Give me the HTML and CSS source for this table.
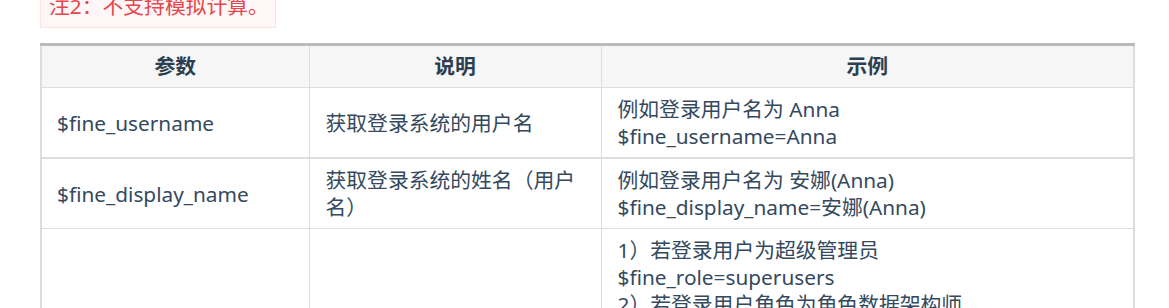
FILE: index.html
```html
<!DOCTYPE html>
<html lang="zh-CN">
<head>
<meta charset="utf-8">
<link rel="stylesheet" href="styles.css">
</head>
<body>
<div class="page">
  <div class="note">注2：不支持模拟计算。</div>
  <table class="params">
    <colgroup>
      <col class="c1"><col class="c2"><col class="c3">
    </colgroup>
    <thead>
      <tr><th>参数</th><th>说明</th><th>示例</th></tr>
    </thead>
    <tbody>
      <tr>
        <td>$fine_username</td>
        <td>获取登录系统的用户名</td>
        <td>例如登录用户名为 Anna<br>$fine_username=Anna</td>
      </tr>
      <tr>
        <td>$fine_display_name</td>
        <td>获取登录系统的姓名（用户名）</td>
        <td>例如登录用户名为 安娜(Anna)<br>$fine_display_name=安娜(Anna)</td>
      </tr>
      <tr>
        <td>$fine_role</td>
        <td>获取登录系统的角色</td>
        <td>1）若登录用户为超级管理员<br>$fine_role=superusers<br>2）若登录用户角色为角色数据架构师<br>$fine_role=数据架构师<br>3）若登录用户有多个角色<br>$fine_role=角色1,角色2<br>4）若登录用户无角色<br>$fine_role=</td>
      </tr>
    </tbody>
  </table>
</div>
</body>
</html>
```
FILE: styles.css
```css
html, body {
  margin: 0;
  padding: 0;
  background: #fff;
}
body {
  font-family: "Noto Sans", "Noto Sans CJK SC", sans-serif;
  font-size: 20.8px;
  line-height: 27px;
  color: #34495e;
}
.page {
  padding: 0 34px 0 40px;
  margin-top: -16px;
}
.note {
  display: inline-block;
  background: #fff7f7;
  border: 1px solid #fde3e3;
  color: #e2484c;
  font-size: 20.8px;
  padding: 8px 6px 8px 8px;
  line-height: 26px;
}
.params {
  margin-top: 15px;
  width: 1095px;
  border-collapse: collapse;
  border-top: 3px solid #bbbbbb;
  border-left: 2px solid #dddddd;
  border-right: 2px solid #dddddd;
}
.c1 { width: 268px; }
.c2 { width: 292px; }
.c3 { width: auto; }
.params th {
  background: #f6f6f6;
  color: #2c3e50;
  font-weight: 700;
  text-align: center;
  padding: 7px 16px 7px;
  border: 1px solid #dddddd;
  border-top: none;
}
.params td {
  padding: 8px 16px 7px 15px;
  border: 1px solid #dddddd;
  vertical-align: middle;
  text-align: left;
}
.params td + td { padding-left: 16px; }
.params tbody tr:nth-child(2) td { border-top: 2px solid #dddddd; }
```
